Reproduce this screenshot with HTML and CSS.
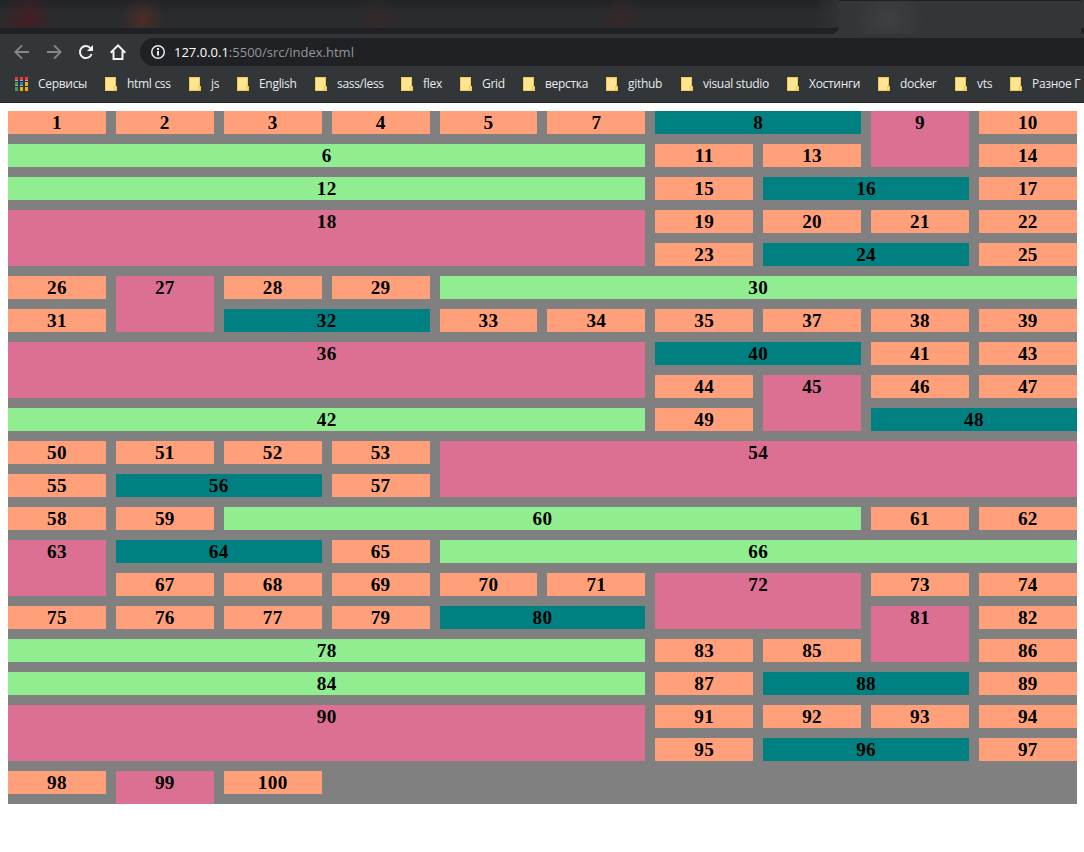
FILE: index.html
```
<!DOCTYPE html>
<html lang="ru">
<head>
<meta charset="utf-8">
<title>Grid</title>
<link rel="stylesheet" href="styles.css">
</head>
<body>
<header class="browser">
  <div class="tabs">
    <div class="tabs-inactive"></div>
    <div class="tab-active"></div>
    <div class="tab-edge"></div>
  </div>
  <div class="toolbar">
    <svg class="nav-icons" width="140" height="32" viewBox="0 0 140 32" fill="none" stroke-width="1.800">
      <path class="dim" d="M29 16H16M22 9.300L15.300 16L22 22.700"/>
      <path class="dim" d="M47 16H60M54 9.300L60.700 16L54 22.700"/>
      <path class="lit" d="M90.600 12.300A6 6 0 1 0 91.600 18"/>
      <path class="lit-fill" d="M93 9V15H87Z"/>
      <path class="lit" d="M110.700 16.700L118 9.400L125.300 16.700M113.500 15V23H122.500V15"/>
    </svg>
    <div class="address">
      <svg class="info" width="16" height="16" viewBox="0 0 16 16" fill="none" stroke="#e8eaed" stroke-width="1.500"><circle cx="8" cy="8" r="6.250"/><path stroke-width="2" d="M8 7V11.500M8 4V6"/></svg>
      <span class="url"><b>127.0.0.1</b>:5500/src/index.html</span>
    </div>
  </div>
  <nav class="bookmarks">
    <div class="bookmark"><svg class="apps" width="13" height="14" viewBox="0 0 13 14"><path fill="#f03a37" d="M0 0h3v3H0zM5 0h3v3H5zM10 0h3v3h-3z"/><path fill="#34a05a" d="M0 5h3v3H0zM0 10h3v4H0z"/><path fill="#1a82f0" d="M5 5h3v3H5z"/><path fill="#f9ab00" d="M10 5h3v3h-3zM5 10h3v4H5zM10 10h3v4h-3z"/><path fill="#a9a9a5" d="M0 3h3v1H0zM5 3h3v1H5zM10 3h3v1h-3zM0 8h3v1H0zM5 8h3v1H5zM10 8h3v1h-3z"/></svg><span>Сервисы</span></div>
    <div class="bookmark"><i class="folder"></i><span>html css</span></div>
    <div class="bookmark"><i class="folder"></i><span>js</span></div>
    <div class="bookmark"><i class="folder"></i><span>English</span></div>
    <div class="bookmark"><i class="folder"></i><span>sass/less</span></div>
    <div class="bookmark"><i class="folder"></i><span>flex</span></div>
    <div class="bookmark"><i class="folder"></i><span>Grid</span></div>
    <div class="bookmark"><i class="folder"></i><span>верстка</span></div>
    <div class="bookmark"><i class="folder"></i><span>github</span></div>
    <div class="bookmark"><i class="folder"></i><span>visual studio</span></div>
    <div class="bookmark"><i class="folder"></i><span>Хостинги</span></div>
    <div class="bookmark"><i class="folder"></i><span>docker</span></div>
    <div class="bookmark"><i class="folder"></i><span>vts</span></div>
    <div class="bookmark"><i class="folder"></i><span>Разное Г</span></div>
  </nav>
</header>
<main class="page">
  <div class="grid">
    <div>1</div><div>2</div><div>3</div><div>4</div><div>5</div><div>6</div><div>7</div><div>8</div><div>9</div><div>10</div>
    <div>11</div><div>12</div><div>13</div><div>14</div><div>15</div><div>16</div><div>17</div><div>18</div><div>19</div><div>20</div>
    <div>21</div><div>22</div><div>23</div><div>24</div><div>25</div><div>26</div><div>27</div><div>28</div><div>29</div><div>30</div>
    <div>31</div><div>32</div><div>33</div><div>34</div><div>35</div><div>36</div><div>37</div><div>38</div><div>39</div><div>40</div>
    <div>41</div><div>42</div><div>43</div><div>44</div><div>45</div><div>46</div><div>47</div><div>48</div><div>49</div><div>50</div>
    <div>51</div><div>52</div><div>53</div><div>54</div><div>55</div><div>56</div><div>57</div><div>58</div><div>59</div><div>60</div>
    <div>61</div><div>62</div><div>63</div><div>64</div><div>65</div><div>66</div><div>67</div><div>68</div><div>69</div><div>70</div>
    <div>71</div><div>72</div><div>73</div><div>74</div><div>75</div><div>76</div><div>77</div><div>78</div><div>79</div><div>80</div>
    <div>81</div><div>82</div><div>83</div><div>84</div><div>85</div><div>86</div><div>87</div><div>88</div><div>89</div><div>90</div>
    <div>91</div><div>92</div><div>93</div><div>94</div><div>95</div><div>96</div><div>97</div><div>98</div><div>99</div><div>100</div>
  </div>
</main>
</body>
</html>
```
FILE: styles.css
```
* { box-sizing: border-box; }

body {
  margin: 0;
  background: #fff;
  overflow: hidden;
}

.browser {
  height: 103px;
  background: #323639;
  border-bottom: 1px solid #202124;
  font-family: "Open Sans", "Noto Sans", sans-serif;
  color: #e8eaed;
}

.tabs {
  display: flex;
  height: 34px;
  background: #323639;
}

.tabs-inactive {
  flex: 0 0 839px;
  border-bottom: 6px solid #202124;
  border-bottom-right-radius: 8px;
  background:
    radial-gradient(circle at 28px 19px, #441d22, transparent 26px),
    radial-gradient(circle at 143px 19px, #4c2d28, transparent 22px),
    radial-gradient(circle at 379px 19px, #33292a, transparent 22px),
    radial-gradient(circle at 621px 19px, #36272a, transparent 22px),
    linear-gradient(90deg, transparent 815px, #303437 839px),
    linear-gradient(#222326, transparent 14px),
    #2a2b2d;
}

.tab-active {
  flex: 1;
  border-top: 1px solid #202124;
  background: radial-gradient(circle at 50px 18px, #3d4144, transparent 36px);
}

.tab-edge {
  flex: 0 0 3px;
  align-self: flex-end;
  height: 6px;
  background: #202124;
  border-radius: 0 0 0 5px;
}

.toolbar {
  display: flex;
  height: 36px;
  align-items: center;
}

.nav-icons { flex: none; }
.dim { stroke: #85888b; }
.lit { stroke: #f1f3f4; stroke-width: 2px; }
.lit-fill { fill: #f1f3f4; }

.address {
  flex: 1;
  display: flex;
  align-items: center;
  height: 28px;
  padding-left: 10px;
  background: #202124;
  border-radius: 14px 0 0 14px;
}

.url {
  margin-left: 8px;
  font-size: 13px;
  line-height: 28px;
  color: #94979b;
  white-space: nowrap;
}

.url b {
  font-weight: 400;
  color: #fff;
}

.bookmarks {
  display: grid;
  grid-template-columns: 90px 84px 48px 78px 86px 59px 63px 83px 75px 106px 91px 77px 55px 74px;
  height: 28px;
  padding-left: 15px;
}

.bookmark {
  display: flex;
  align-items: center;
  gap: 10px;
  overflow: hidden;
  font-size: 12px;
  line-height: 28px;
  letter-spacing: -0.3px;
  white-space: nowrap;
}

.apps { flex: none; }

.folder {
  flex: none;
  width: 12px;
  height: 14px;
  background:
    linear-gradient(#ffe07a, #ffe07a) 10px 10px / 1px 3px no-repeat,
    linear-gradient(#edc852, #edc852) 9px 9px / 3px 5px no-repeat,
    linear-gradient(#ffe491, #ffe491) 1px 1px / 9px 12px no-repeat,
    linear-gradient(#edc852, #edc852) 0 0 / 11px 14px no-repeat;
}

.page { padding: 8px 7.2px 0 8px; }

.grid {
  display: grid;
  grid-template-columns: repeat(10, 1fr);
  grid-auto-flow: dense;
  gap: 10px;
  background: gray;
  font: bold 19.2px/21px "Liberation Serif", "Times New Roman", serif;
  letter-spacing: 0.3px;
  text-align: center;
}

.grid > div {
  padding: 1px 0;
  background: lightsalmon;
}

.grid > div:nth-child(6n) {
  grid-column: span 6;
  background: lightgreen;
}

.grid > div:nth-child(8n) {
  grid-column: span 2;
  background: teal;
}

.grid > div:nth-child(9n) {
  grid-row: span 2;
  background: palevioletred;
}
```
